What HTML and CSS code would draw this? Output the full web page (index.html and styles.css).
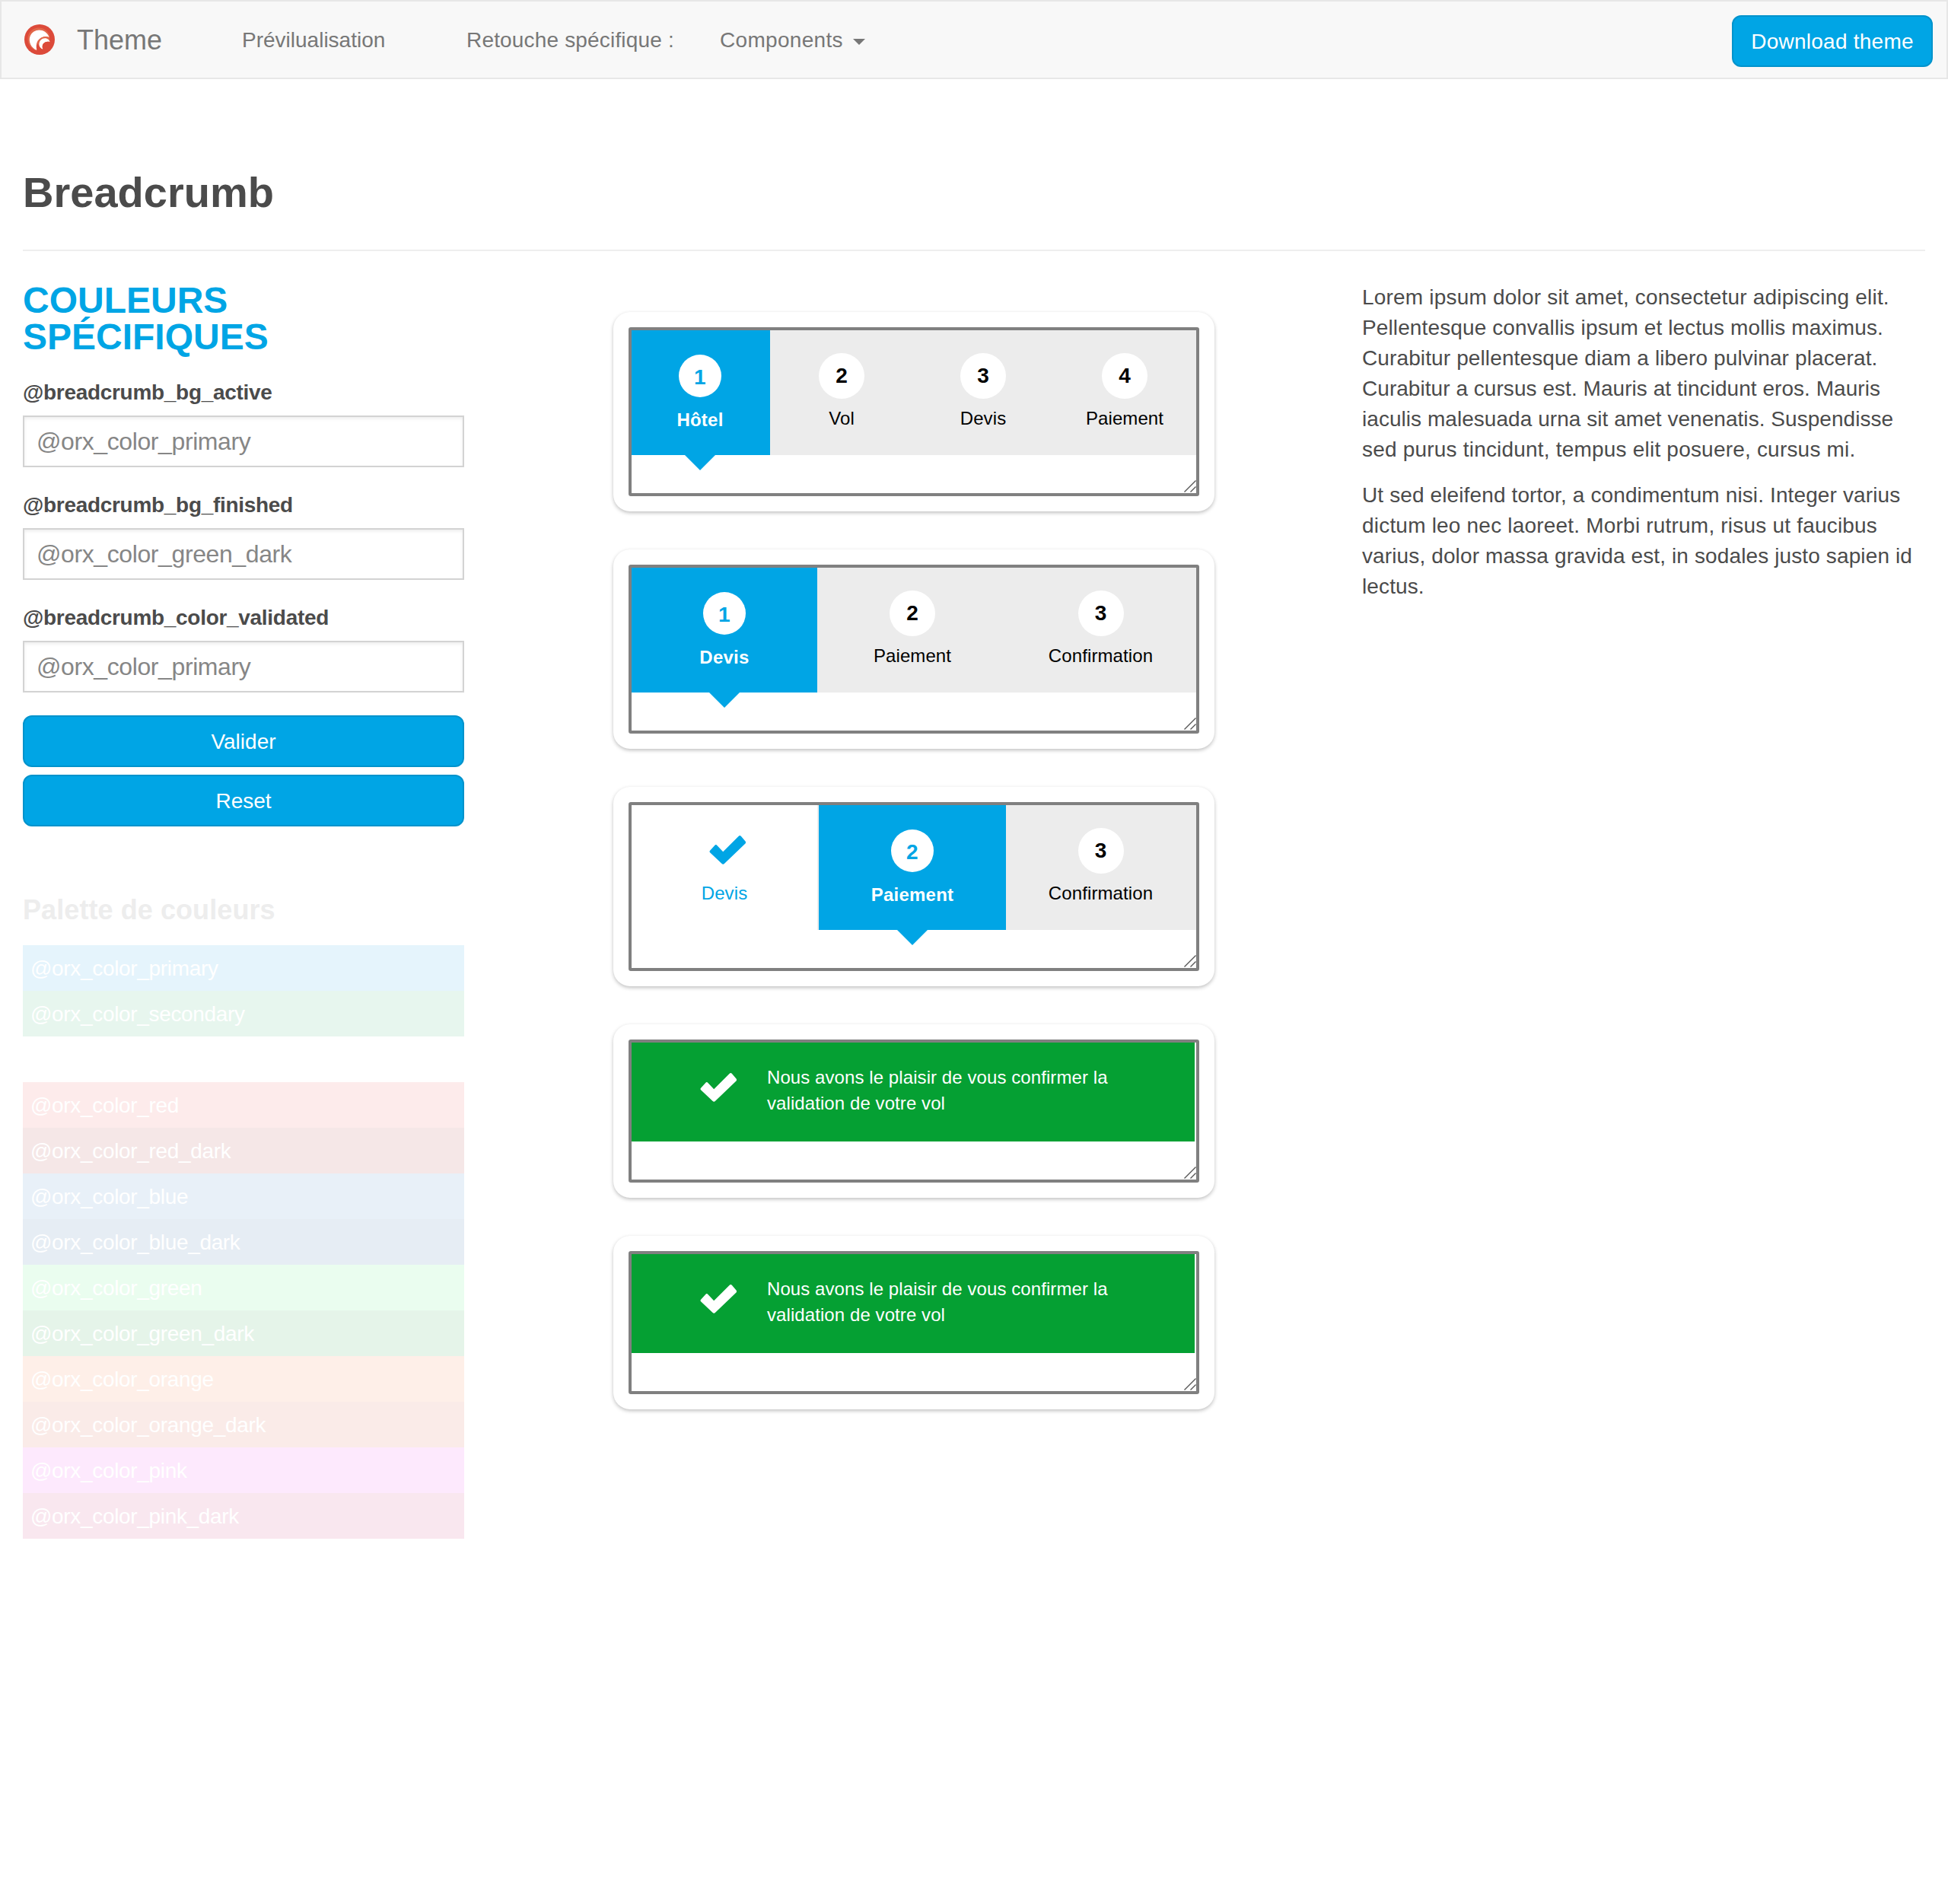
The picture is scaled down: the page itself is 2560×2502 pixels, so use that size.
FILE: index.html
```html
<!DOCTYPE html>
<html lang="fr">
<head>
<meta charset="utf-8">
<title>Theme – Breadcrumb</title>
<link rel="stylesheet" href="styles.css">
</head>
<body>
<svg class="defs" width="0" height="0" aria-hidden="true">
  <symbol id="check" viewBox="0 0 48 38"><path d="M1.300 19.500L7.200 12.900Q8.800 11.200 10.400 12.900L18.200 21.300L38.500 1Q40.300-.8 42 1.100L47.300 7.200Q48.900 9 47.200 10.700L19.800 37Q18.200 38.500 16.700 37L1.300 22.500Q-.3 21 1.300 19.500Z" fill="currentColor"/></symbol>
  <symbol id="grip" viewBox="0 0 16 16"><path d="M.5 15.500L15.500.5M8.500 15.500L15.500 8.500" stroke="#555" stroke-width="1.400" fill="none"/></symbol>
</svg>
<nav class="navbar">
  <svg class="logo" viewBox="0 0 40 40">
    <circle cx="20" cy="20" r="20" fill="#dc4a3a"/>
    <path d="M15.500 34.500C6 31 1.500 20 6.500 11.500C12 2 27 1.500 33 13.500L33 20Z" fill="#e2674a"/>
    <path d="M16.500 34C8.500 31 5 22 7.600 15.400C12 4.500 28 4.500 32.700 17C24 13.500 14 20 16.500 34Z" fill="#fff"/>
    <path d="M16.500 34C13 23 21 13.500 32.700 17L33.500 23L21 33Z" fill="#e2674a"/>
    <path d="M24.500 33C16.500 30 18.500 18.500 27 18.200C30.500 18.100 33 20.500 33.500 23.300C27.500 21.300 21.500 26 24.500 33Z" fill="#fff"/>
    <path d="M24.500 33C21.500 26 27.500 21.300 33.500 23.300L35 28L28 35Z" fill="#dc4a3a"/>
    <path d="M17 34.500C15.500 31 15.600 27 18.500 25.500C18.800 29 21 31.800 24.500 33L23 36Z" fill="#dc4a3a"/>
  </svg>
  <span class="brand">Theme</span>
  <a class="nav-preview">Prévilualisation</a>
  <span class="nav-label">Retouche spécifique :</span>
  <a class="nav-menu">Components<i class="caret"></i></a>
  <button class="btn btn-download">Download theme</button>
</nav>
<header class="page-header"><h1>Breadcrumb</h1></header>
<main class="columns">
  <section class="settings">
    <h2>COULEURS<br>SPÉCIFIQUES</h2>
    <div class="field"><label>@breadcrumb_bg_active</label><div class="input">@orx_color_primary</div></div>
    <div class="field"><label>@breadcrumb_bg_finished</label><div class="input">@orx_color_green_dark</div></div>
    <div class="field"><label>@breadcrumb_color_validated</label><div class="input">@orx_color_primary</div></div>
    <button class="btn">Valider</button>
    <button class="btn">Reset</button>
    <h3>Palette de couleurs</h3>
    <ul class="palette">
      <li class="c-primary">@orx_color_primary</li>
      <li class="c-secondary">@orx_color_secondary</li>
    </ul>
    <ul class="palette">
      <li class="c-red">@orx_color_red</li>
      <li class="c-red-dark">@orx_color_red_dark</li>
      <li class="c-blue">@orx_color_blue</li>
      <li class="c-blue-dark">@orx_color_blue_dark</li>
      <li class="c-green">@orx_color_green</li>
      <li class="c-green-dark">@orx_color_green_dark</li>
      <li class="c-orange">@orx_color_orange</li>
      <li class="c-orange-dark">@orx_color_orange_dark</li>
      <li class="c-pink">@orx_color_pink</li>
      <li class="c-pink-dark">@orx_color_pink_dark</li>
    </ul>
  </section>
  <section class="previews">
    <div class="card"><div class="frame">
      <ol class="steps four">
        <li class="active"><b>1</b><span>Hôtel</span></li>
        <li><b>2</b><span>Vol</span></li>
        <li><b>3</b><span>Devis</span></li>
        <li><b>4</b><span>Paiement</span></li>
      </ol>
      <svg class="grip"><use href="#grip"/></svg>
    </div></div>
    <div class="card"><div class="frame">
      <ol class="steps three">
        <li class="active"><b>1</b><span>Devis</span></li>
        <li><b>2</b><span>Paiement</span></li>
        <li><b>3</b><span>Confirmation</span></li>
      </ol>
      <svg class="grip"><use href="#grip"/></svg>
    </div></div>
    <div class="card"><div class="frame">
      <ol class="steps three">
        <li class="done"><svg class="check"><use href="#check"/></svg><span>Devis</span></li>
        <li class="active"><b>2</b><span>Paiement</span></li>
        <li><b>3</b><span>Confirmation</span></li>
      </ol>
      <svg class="grip"><use href="#grip"/></svg>
    </div></div>
    <div class="card"><div class="frame">
      <div class="confirm"><svg class="check"><use href="#check"/></svg><p>Nous avons le plaisir de vous confirmer la<br>validation de votre vol</p></div>
      <svg class="grip"><use href="#grip"/></svg>
    </div></div>
    <div class="card"><div class="frame">
      <div class="confirm"><svg class="check"><use href="#check"/></svg><p>Nous avons le plaisir de vous confirmer la<br>validation de votre vol</p></div>
      <svg class="grip"><use href="#grip"/></svg>
    </div></div>
  </section>
  <section class="notes">
    <p><span class="loose">Lorem ipsum dolor sit amet, consectetur adipiscing elit.</span><br>Pellentesque convallis ipsum et lectus mollis maximus.<br>Curabitur pellentesque diam a libero pulvinar placerat.<br><span class="tight">Curabitur a cursus est. Mauris at tincidunt eros. Mauris<br>iaculis malesuada urna sit amet venenatis. Suspendisse</span><br><span class="loose">sed purus tincidunt, tempus elit posuere, cursus mi.</span></p>
    <p>Ut sed eleifend tortor, a condimentum nisi. Integer varius<br><span class="loose">dictum leo nec laoreet. Morbi rutrum, risus ut faucibus</span><br>varius, dolor massa gravida est, in sodales justo sapien id<br>lectus.</p>
  </section>
</main>
</body>
</html>
```
FILE: styles.css
```css
* { box-sizing: border-box; }
body {
  margin: 0;
  min-height: 2502px;
  background: #fff;
  color: #4b4b4b;
  font: 28px/40px "Liberation Sans", Arial, sans-serif;
}
h1, h2, h3, p, ul, ol { margin: 0; padding: 0; }
li { list-style: none; }
.defs { position: absolute; }

.navbar {
  display: flex;
  align-items: center;
  height: 104px;
  padding: 0 18px 0 30px;
  border: 2px solid #e7e7e7;
  background: #f8f8f8;
  color: #777;
  white-space: nowrap;
}
.logo { width: 40px; height: 40px; }
.brand { width: 217px; margin-left: 29px; font-size: 36px; }
.brand, .nav-preview, .nav-label, .nav-menu { padding-top: 2px; }
.nav-preview { width: 295px; }
.nav-label { width: 333px; letter-spacing: .17px; }
.nav-menu { display: flex; align-items: center; gap: 13px; letter-spacing: .3px; }
.caret { border: 8px solid transparent; border-top-color: currentColor; border-bottom: 0; margin-top: 3px; }

.btn {
  display: block;
  width: 100%;
  height: 68px;
  margin: 0 0 10px;
  padding: 1px 0 0;
  border: 2px solid #0093cc;
  border-radius: 12px;
  background: #00a5e5;
  color: #fff;
  font: inherit;
}
.btn-download { width: 264px; margin: 4px 0 0 auto; letter-spacing: .25px; }

.page-header { margin: 0 30px; padding: 118px 0 44px; border-bottom: 2px solid #eee; }
h1 { font-size: 56px; line-height: 62px; }

.columns { display: grid; grid-template-columns: 580px 790px 742px; column-gap: 196px; margin: 40px 28px 0 30px; align-items: start; }

h2 { padding-top: 1px; color: #00a5e5; font-size: 48px; line-height: 48px; margin-bottom: 30px; }
.field { margin-bottom: 30px; }
.field:first-of-type { margin-top: -1px; }
label { display: block; margin-bottom: 10px; font-weight: bold; letter-spacing: -.3px; }
.input {
  height: 68px;
  padding: 12px 16px;
  border: 2px solid #d3d3d3;
  box-shadow: inset 0 2px 4px rgba(0, 0, 0, .08);
  color: #868686;
  font-size: 32px;
  letter-spacing: -.4px;
}
h3 { margin: 90px 0 26px; color: #ededed; font-size: 36px; line-height: 40px; letter-spacing: .08px; }
.palette + .palette { margin-top: 60px; }
.palette li { height: 60px; padding: 11px 10px 0; color: #fff; letter-spacing: -.33px; }
.c-primary { background: #e5f4fc; }
.c-secondary { background: #e7f6ee; }
.c-red { background: #fdebeb; }
.c-red-dark { background: #f5e7e7; }
.c-blue { background: #e8f0f8; }
.c-blue-dark { background: #e6edf4; }
.c-green { background: #eafdef; }
.c-green-dark { background: #e5f4e9; }
.c-orange { background: #feefe8; }
.c-orange-dark { background: #faebe8; }
.c-pink { background: #fde9fd; }
.c-pink-dark { background: #f9e7ef; }

.previews { display: grid; gap: 50px; padding-top: 40px; }
.card { padding: 20px; border-radius: 22px; background: #fff; box-shadow: 0 2px 5px rgba(0, 0, 0, .25); }
.frame { position: relative; padding-bottom: 50px; border: 4px solid #808080; border-radius: 3px; }
.grip { position: absolute; right: 0; bottom: 1px; width: 16px; height: 16px; }
.steps { display: grid; height: 164px; background: #ececec; color: #000; font-size: 24px; line-height: 34px; letter-spacing: .1px; }
.four { grid-template-columns: 184px 186px 186px 186px; }
.three { grid-template-columns: 246px 248px 248px; }
.steps li {
  position: relative;
  display: flex;
  flex-direction: column;
  align-items: center;
  padding-top: 30px;
  border-right: 2px solid #ececec;
}
.three li:last-child { padding-right: 1px; }
.steps b {
  width: 60px;
  height: 60px;
  margin-bottom: 9px;
  border-radius: 50%;
  background: #fff;
  font-size: 28px;
  line-height: 60px;
  text-align: center;
}
.steps .active { padding-top: 32px; background: #00a5e5; background-clip: padding-box; color: #fff; font-weight: bold; letter-spacing: .25px; }
.four .active { padding-right: 2px; }
.active b { width: 56px; height: 56px; margin-bottom: 13px; color: #00a5e5; line-height: 60px; }
.active::after {
  content: "";
  position: absolute;
  top: 100%;
  left: calc(50% - 20px);
  border: 20px solid transparent;
  border-top-color: #00a5e5;
  border-bottom: 0;
}
.four .active::after { left: calc(50% - 21px); }
.steps .done { padding-top: 40px; background: #fff; color: #00a5e5; }
.check { flex: none; width: 48px; height: 38px; }
.done .check { margin: 0 0 21px 8px; }
.confirm {
  display: flex;
  width: 740px;
  height: 130px;
  padding: 29px 0 0 90px;
  background: #05a033;
  color: #fff;
  font-size: 24px;
  line-height: 34px;
  letter-spacing: .08px;
}
.confirm .check { margin: 11px 40px 0 0; }
.notes { margin-left: -2px; padding-top: 1px; letter-spacing: .12px; }
.notes p { margin-bottom: 20px; white-space: nowrap; }
.loose { letter-spacing: .2px; }
.tight { letter-spacing: .045px; }
```
